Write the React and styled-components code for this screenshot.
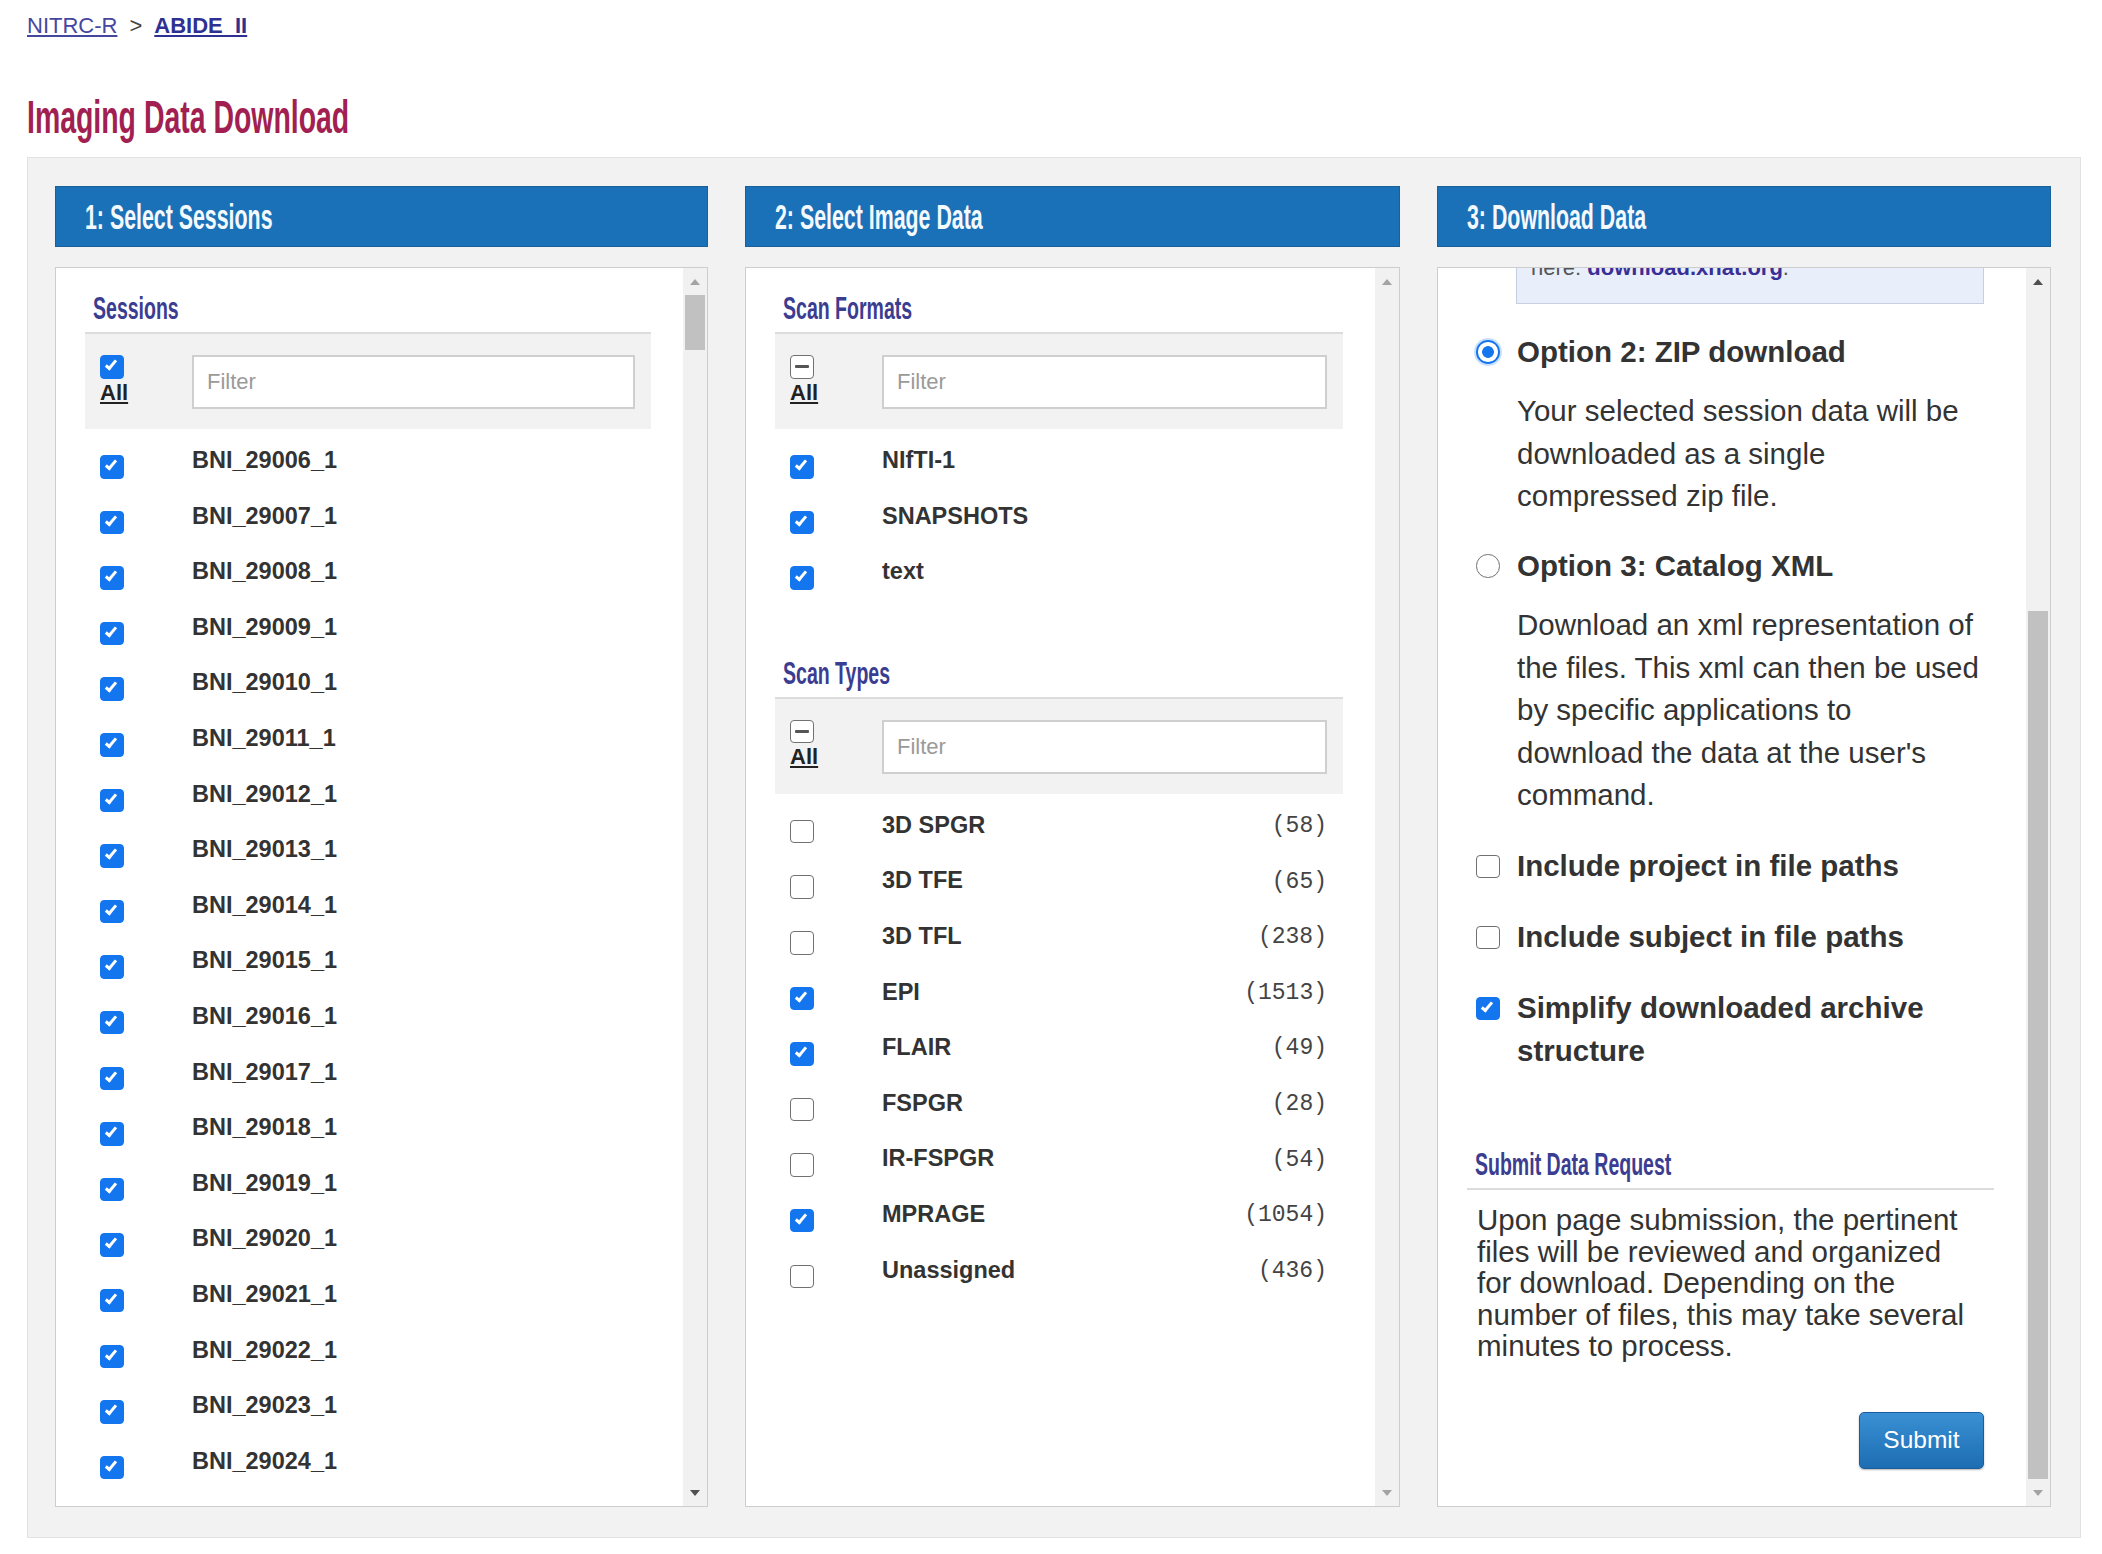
import React, { useLayoutEffect, useRef, useState } from 'react';
import styled, { createGlobalStyle } from 'styled-components';

const SANS = '"Liberation Sans", Arial, Helvetica, sans-serif';

const GlobalStyle = createGlobalStyle`
  html, body { margin: 0; padding: 0; background: #fff; }
  body { font-family: ${SANS}; color: #333; }
  *, *::before, *::after { box-sizing: border-box; }
`;

const Page = styled.div`
  padding: 11px 21px 0 27px;
`;

const Breadcrumb = styled.nav`
  font: 22px/30px ${SANS};
  color: #444;
  display: flex;
  align-items: baseline;
`;

const Crumb = styled.a`
  color: ${p => (p.$current ? '#2e3192' : '#45479f')};
  font-weight: ${p => (p.$current ? 700 : 400)};
  text-decoration: underline;
  text-underline-offset: 2px;
`;

const Sep = styled.span`
  margin: 0 12px;
  color: #444;
`;

const Condensed = styled.span`
  display: inline-block;
  white-space: nowrap;
  transform: scaleX(${p => p.$scale || 0.61});
  transform-origin: 0 50%;
`;

const PageTitle = styled.h1`
  margin: 53px 0 17px;
  font: 700 46px/46px ${SANS};
  color: #a21f51;
`;

const Workspace = styled.div`
  background: #f2f2f2;
  border: 1px solid #e2e2e2;
  padding: 28px 29px 30px 27px;
  display: grid;
  grid-template-columns: 653px 655px 614px;
  column-gap: 37px;
`;

const Panel = styled.section`
  display: flex;
  flex-direction: column;
  gap: 20px;
  min-width: 0;
`;

const PanelHeader = styled.h2`
  margin: 0;
  height: 61px;
  padding: 0 29px;
  display: flex;
  align-items: center;
  background: #1b71b8;
  border: 1px solid #1a609a;
  color: #f4f9fd;
  font: 700 35px/1 ${SANS};
`;

const PanelBody = styled.div`
  display: flex;
  height: 1240px;
  background: #fff;
  border: 1px solid #cdcdcd;
`;

const ScrollArea = styled.div`
  flex: 1;
  min-width: 0;
  overflow: hidden;
  padding: 0 32px 0 29px;
`;

const ScrollTrack = styled.div`
  flex: none;
  width: 24px;
  background: #f1f1f1;
  display: flex;
  flex-direction: column;
`;

const ScrollArrow = styled.div`
  flex: none;
  height: 27px;
  display: flex;
  align-items: center;
  justify-content: center;
  color: ${p => (p.$idle ? '#a3a3a3' : '#505050')};
`;

const ThumbLane = styled.div`
  flex: 1;
  display: flex;
  flex-direction: column;
`;

const LaneGap = styled.div`
  flex-basis: 0;
  min-height: 0;
`;

const Thumb = styled.div`
  flex-basis: 0;
  min-height: 0;
  margin: 0 2px;
  background: #c1c1c1;
`;

const SectionTitle = styled.h3`
  margin: ${p => (p.$spaced ? '33px 0 0' : '0')};
  padding: 22px 8px 6px;
  border-bottom: 2px solid #dcdcdc;
  color: #3b3d91;
  font: 700 32px/36px ${SANS};
`;

const FilterBox = styled.div`
  display: flex;
  align-items: flex-start;
  background: #f2f2f2;
  padding: 21px 16px 20px 15px;
`;

const AllToggle = styled.label`
  flex: none;
  width: 92px;
  display: flex;
  flex-direction: column;
  align-items: flex-start;
  gap: 1px;
`;

const AllText = styled.span`
  font: 700 22px/26px ${SANS};
  color: #222;
  text-decoration: underline;
  text-underline-offset: 2px;
`;

const FilterInput = styled.input`
  flex: 1;
  min-width: 0;
  height: 54px;
  margin: 0;
  border: 2px solid #cfcfcf;
  background: #fff;
  padding: 0 13px;
  font: 22px ${SANS};
  color: #333;
  &::placeholder {
    color: #9a9a9a;
  }
`;

const Check = styled.input.attrs({ type: 'checkbox' })`
  appearance: none;
  -webkit-appearance: none;
  flex: none;
  width: 23.5px;
  height: 23.5px;
  margin: ${p => p.$offset || '0'};
  border: 1.5px solid #717171;
  border-radius: 4px;
  background: #fff;
  position: relative;

  &:checked {
    background: #1476ef;
    border-color: #1476ef;
  }
  &:checked::after {
    content: '';
    position: absolute;
    left: 6.5px;
    top: 2px;
    width: 6px;
    height: 12px;
    border: solid #fff;
    border-width: 0 3px 3px 0;
    transform: rotate(40deg);
  }
  &:indeterminate::after {
    content: '';
    position: absolute;
    left: 4px;
    right: 4px;
    top: 50%;
    height: 3px;
    margin-top: -1.5px;
    background: #555;
    border-radius: 1px;
  }
`;

const ItemList = styled.ul`
  list-style: none;
  margin: 4px 0 0;
  padding: 0;
`;

const ItemRow = styled.li`
  display: flex;
  align-items: center;
  height: 55.6px;
  padding: 0 16px 0 15px;
`;

const CheckCell = styled.span`
  flex: none;
  width: 92px;
  display: flex;
  align-items: center;
`;

const ItemLabel = styled.span`
  flex: 1;
  font: 700 23.5px/1 ${SANS};
  color: #333;
`;

const ItemCount = styled.span`
  flex: none;
  font: 23px/1 "Liberation Mono", "DejaVu Sans Mono", monospace;
  color: #444;
  margin-top: 2px;
`;

const OptionBlock = styled.div`
  margin-top: ${p => (p.$first ? 22 : 27)}px;
`;

const ChoiceRow = styled.label`
  display: flex;
  align-items: flex-start;
  padding-left: 9px;
  margin-top: ${p => p.$gap || 0}px;
`;

const ChoiceLabel = styled.span`
  font: 700 29.5px/42.5px ${SANS};
  color: #333;
`;

const Radio = styled.input.attrs({ type: 'radio', name: 'download-option' })`
  appearance: none;
  -webkit-appearance: none;
  flex: none;
  width: 23.5px;
  height: 23.5px;
  margin: 9.5px 17.5px 0 0;
  border-radius: 50%;
  border: 1.5px solid #717171;
  background: #fff;

  &:checked {
    border: 2px solid #1476ef;
    background: radial-gradient(circle, #1476ef 0 5.5px, #fff 6.2px);
    box-shadow: 0 0 0 2px rgba(20, 118, 239, 0.22);
  }
`;

const ChoiceText = styled.p`
  margin: 17px 0 0 50px;
  max-width: 466px;
  font: 29.5px/42.5px ${SANS};
  color: #333;
`;

const InfoBox = styled.div`
  margin: 20px 10px 0 49px;
  background: #e8effb;
  border: 1px solid #c9cfe0;
  padding: 12px 14px 20px;
  font: 22px/30px ${SANS};
  color: #555;
`;

const InfoLink = styled.a`
  color: #3a2f96;
  font-weight: 700;
  text-decoration: none;
`;

const SubmitSection = styled.div`
  margin-top: 52px;
`;

const SubmitText = styled.p`
  margin: 14px 0 0;
  padding-left: 10px;
  max-width: 510px;
  font: 29.5px/31.5px ${SANS};
  color: #333;
`;

const ButtonRow = styled.div`
  display: flex;
  justify-content: flex-end;
  margin-top: 50px;
  padding: 0 10px 37px 0;
`;

const SubmitButton = styled.button`
  width: 125px;
  height: 57px;
  border: 1px solid #1a5d9c;
  border-radius: 5px;
  background: linear-gradient(#3a90d4, #1d6db2);
  box-shadow: 0 1px 2px rgba(0, 0, 0, 0.3);
  color: #fff;
  font: 24.5px ${SANS};
  cursor: pointer;
`;

const SITES = [
  ['BNI', 29006, 58], ['EMC', 29864, 54], ['ETHZ', 30000, 37], ['GU', 28745, 106],
  ['IP', 29485, 56], ['IU', 29730, 40], ['KKI', 29293, 211], ['KUL', 29244, 28],
  ['NYU', 29177, 78], ['OHSU', 28997, 93], ['ONRC', 30199, 59], ['SDSU', 28810, 58],
];

const SESSIONS = SITES.flatMap(([site, start, n]) =>
  Array.from({ length: n }, (_, i) => `${site}_${start + i}_1`)
).slice(0, 480);

const FORMATS = ['NIfTI-1', 'SNAPSHOTS', 'text'];

const SCAN_TYPES = [
  { name: '3D SPGR', count: 58, on: false },
  { name: '3D TFE', count: 65, on: false },
  { name: '3D TFL', count: 238, on: false },
  { name: 'EPI', count: 1513, on: true },
  { name: 'FLAIR', count: 49, on: true },
  { name: 'FSPGR', count: 28, on: false },
  { name: 'IR-FSPGR', count: 54, on: false },
  { name: 'MPRAGE', count: 1054, on: true },
  { name: 'Unassigned', count: 436, on: false },
];

const mixed = el => {
  if (el) el.indeterminate = true;
};

function ArrowIcon({ down }) {
  return (
    <svg width="10" height="6" viewBox="0 0 10 6" aria-hidden="true">
      <polygon points={down ? '0,0 10,0 5,6' : '0,6 10,6 5,0'} fill="currentColor" />
    </svg>
  );
}

function ScrollPanel({ toBottom, children }) {
  const areaRef = useRef(null);
  const [metrics, setMetrics] = useState({ top: 0, size: 1, scrollable: false, atTop: true, atBottom: true });

  useLayoutEffect(() => {
    const el = areaRef.current;
    if (!el) return;
    if (toBottom) el.scrollTop = el.scrollHeight;
    const { scrollTop, scrollHeight, clientHeight } = el;
    setMetrics({
      top: scrollTop / scrollHeight,
      size: clientHeight / scrollHeight,
      scrollable: scrollHeight > clientHeight + 1,
      atTop: scrollTop <= 0,
      atBottom: scrollTop + clientHeight >= scrollHeight - 1,
    });
  }, [toBottom]);

  const rest = Math.max(0, 1 - metrics.top - metrics.size);

  return (
    <PanelBody>
      <ScrollArea ref={areaRef}>{children}</ScrollArea>
      <ScrollTrack>
        <ScrollArrow $idle={metrics.atTop}><ArrowIcon /></ScrollArrow>
        <ThumbLane>
          {metrics.scrollable && (
            <>
              <LaneGap style={{ flexGrow: metrics.top }} />
              <Thumb style={{ flexGrow: metrics.size }} />
              <LaneGap style={{ flexGrow: rest }} />
            </>
          )}
        </ThumbLane>
        <ScrollArrow $idle={metrics.atBottom}><ArrowIcon down /></ScrollArrow>
      </ScrollTrack>
    </PanelBody>
  );
}

function FilterHeader({ indeterminate }) {
  return (
    <FilterBox>
      <AllToggle>
        {indeterminate ? <Check ref={mixed} /> : <Check defaultChecked />}
        <AllText>All</AllText>
      </AllToggle>
      <FilterInput placeholder="Filter" />
    </FilterBox>
  );
}

function Heading({ children, spaced }) {
  return (
    <SectionTitle $spaced={spaced}>
      <Condensed>{children}</Condensed>
    </SectionTitle>
  );
}

function SessionsPanel() {
  return (
    <Panel>
      <PanelHeader><Condensed>1: Select Sessions</Condensed></PanelHeader>
      <ScrollPanel>
        <Heading>Sessions</Heading>
        <FilterHeader />
        <ItemList>
          {SESSIONS.map(s => (
            <ItemRow key={s}>
              <CheckCell><Check defaultChecked $offset="12px 0 0" /></CheckCell>
              <ItemLabel>{s}</ItemLabel>
            </ItemRow>
          ))}
        </ItemList>
      </ScrollPanel>
    </Panel>
  );
}

function ImageDataPanel() {
  return (
    <Panel>
      <PanelHeader><Condensed>2: Select Image Data</Condensed></PanelHeader>
      <ScrollPanel>
        <Heading>Scan Formats</Heading>
        <FilterHeader indeterminate />
        <ItemList>
          {FORMATS.map(f => (
            <ItemRow key={f}>
              <CheckCell><Check defaultChecked $offset="12px 0 0" /></CheckCell>
              <ItemLabel>{f}</ItemLabel>
            </ItemRow>
          ))}
        </ItemList>
        <Heading spaced>Scan Types</Heading>
        <FilterHeader indeterminate />
        <ItemList>
          {SCAN_TYPES.map(t => (
            <ItemRow key={t.name}>
              <CheckCell><Check defaultChecked={t.on} $offset="12px 0 0" /></CheckCell>
              <ItemLabel>{t.name}</ItemLabel>
              <ItemCount>({t.count})</ItemCount>
            </ItemRow>
          ))}
        </ItemList>
      </ScrollPanel>
    </Panel>
  );
}

function DownloadPanel() {
  return (
    <Panel>
      <PanelHeader><Condensed>3: Download Data</Condensed></PanelHeader>
      <ScrollPanel toBottom>
        <OptionBlock $first>
          <ChoiceRow>
            <Radio />
            <ChoiceLabel>Option 1: Desktop Client</ChoiceLabel>
          </ChoiceRow>
          <ChoiceText>
            Download the selected session data directly to your computer using the XNAT
            Desktop Client, which manages large transfers.
          </ChoiceText>
          <InfoBox>
            The XNAT Desktop Client must be installed on your computer to use this option. It
            is available for Windows, Mac and Linux, supports resuming interrupted transfers,
            and can be downloaded from the XNAT website
            <br />
            here: <InfoLink href="#">download.xnat.org</InfoLink>.
          </InfoBox>
        </OptionBlock>

        <OptionBlock>
          <ChoiceRow>
            <Radio defaultChecked />
            <ChoiceLabel>Option 2: ZIP download</ChoiceLabel>
          </ChoiceRow>
          <ChoiceText>
            Your selected session data will be downloaded as a single compressed zip file.
          </ChoiceText>
        </OptionBlock>

        <OptionBlock>
          <ChoiceRow>
            <Radio />
            <ChoiceLabel>Option 3: Catalog XML</ChoiceLabel>
          </ChoiceRow>
          <ChoiceText>
            Download an xml representation of the files. This xml can then be used by specific
            applications to download the data at the user's command.
          </ChoiceText>
        </OptionBlock>

        <ChoiceRow $gap={28.5}>
          <Check $offset="9.5px 17.5px 0 0" />
          <ChoiceLabel>Include project in file paths</ChoiceLabel>
        </ChoiceRow>
        <ChoiceRow $gap={28.5}>
          <Check $offset="9.5px 17.5px 0 0" />
          <ChoiceLabel>Include subject in file paths</ChoiceLabel>
        </ChoiceRow>
        <ChoiceRow $gap={28.5}>
          <Check defaultChecked $offset="9.5px 17.5px 0 0" />
          <ChoiceLabel>Simplify downloaded archive structure</ChoiceLabel>
        </ChoiceRow>

        <SubmitSection>
          <SectionTitle>
            <Condensed>Submit Data Request</Condensed>
          </SectionTitle>
          <SubmitText>
            Upon page submission, the pertinent files will be reviewed and organized for
            download. Depending on the number of files, this may take several minutes to
            process.
          </SubmitText>
          <ButtonRow>
            <SubmitButton type="button">Submit</SubmitButton>
          </ButtonRow>
        </SubmitSection>
      </ScrollPanel>
    </Panel>
  );
}

export default function App() {
  return (
    <>
      <GlobalStyle />
      <Page>
        <Breadcrumb>
          <Crumb href="#">NITRC-R</Crumb>
          <Sep>&gt;</Sep>
          <Crumb href="#" $current>ABIDE_II</Crumb>
        </Breadcrumb>
        <PageTitle>
          <Condensed $scale={0.618}>Imaging Data Download</Condensed>
        </PageTitle>
        <Workspace>
          <SessionsPanel />
          <ImageDataPanel />
          <DownloadPanel />
        </Workspace>
      </Page>
    </>
  );
}
